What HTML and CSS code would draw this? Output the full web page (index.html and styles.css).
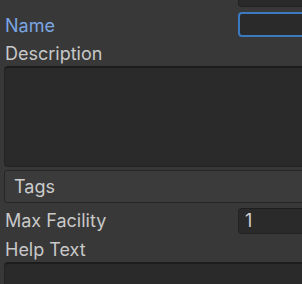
FILE: index.html
```html
<!DOCTYPE html>
<html lang="en">
<head>
    <meta charset="UTF-8">
    <title>Inspector</title>
    <link rel="stylesheet" href="styles.css">
</head>
<body>
    <div class="inspector">
        <!-- ID row, scrolled partly out of view -->
        <div class="row row-id">
            <span class="label">ID</span>
            <div class="field">2</div>
        </div>

        <div class="row row-name">
            <span class="label label-focus">Name</span>
            <div class="field field-focus"></div>
        </div>

        <div class="label block-label desc-label">Description</div>
        <div class="text-area desc-area"></div>

        <div class="foldout">Tags</div>

        <div class="row row-max">
            <span class="label">Max Facility</span>
            <div class="field">1</div>
        </div>

        <div class="label block-label help-label">Help Text</div>
        <div class="text-area help-area"></div>
    </div>
</body>
</html>
```

FILE: styles.css
```css
* {
    margin: 0;
    padding: 0;
    box-sizing: border-box;
}

html, body {
    height: 100%;
    overflow: hidden;
}

body {
    background-color: #383838;
    font-family: Inter, "Noto Sans", sans-serif;
    font-size: 18px;
    color: #c8c8c8;
}

.inspector {
    display: flex;
    flex-direction: column;
    margin-top: -20px;
    padding-left: 5px;
}

.row {
    display: flex;
    align-items: center;
    justify-content: space-between;
}

.label {
    line-height: 22px;
    white-space: nowrap;
}

.label-focus {
    color: #7ba6e3;
    padding-top: 3px;
}

.field {
    flex: none;
    width: 90px;
    margin-right: -26px;
    height: 26px;
    background-color: #2a2a2a;
    border: 1px solid #222222;
    border-top-color: #1e1e1e;
    border-radius: 4px;
    padding: 0 6px;
    line-height: 24px;
    color: #d0d0d0;
}

.row-id {
    height: 27px;
}

.row-name {
    height: 28px;
    margin-top: 3px;
}

.field-focus {
    height: 25px;
    border: 2px solid #3b7ac0;
}

.block-label {
    height: 28px;
    line-height: 28px;
}

.desc-label {
    padding-top: 3px;
    line-height: 25px;
}

.text-area {
    margin-left: -1px;
    margin-right: -10px;
    background-color: #2a2a2a;
    border: 1px solid #232323;
    border-top: 2px solid #1c1c1c;
    border-radius: 4px;
}

.desc-area {
    height: 101px;
}

.foldout {
    margin-top: 3px;
    margin-left: -1px;
    margin-right: -10px;
    height: 33px;
    line-height: 31px;
    padding-left: 9px;
    background-color: #3b3b3b;
    border: 1px solid #262626;
    border-radius: 3px;
    color: #cccccc;
}

.row-max {
    height: 32px;
    margin-top: 2px;
}

.help-label {
    height: 25px;
    line-height: 25px;
}

.help-area {
    height: 60px;
}
```
